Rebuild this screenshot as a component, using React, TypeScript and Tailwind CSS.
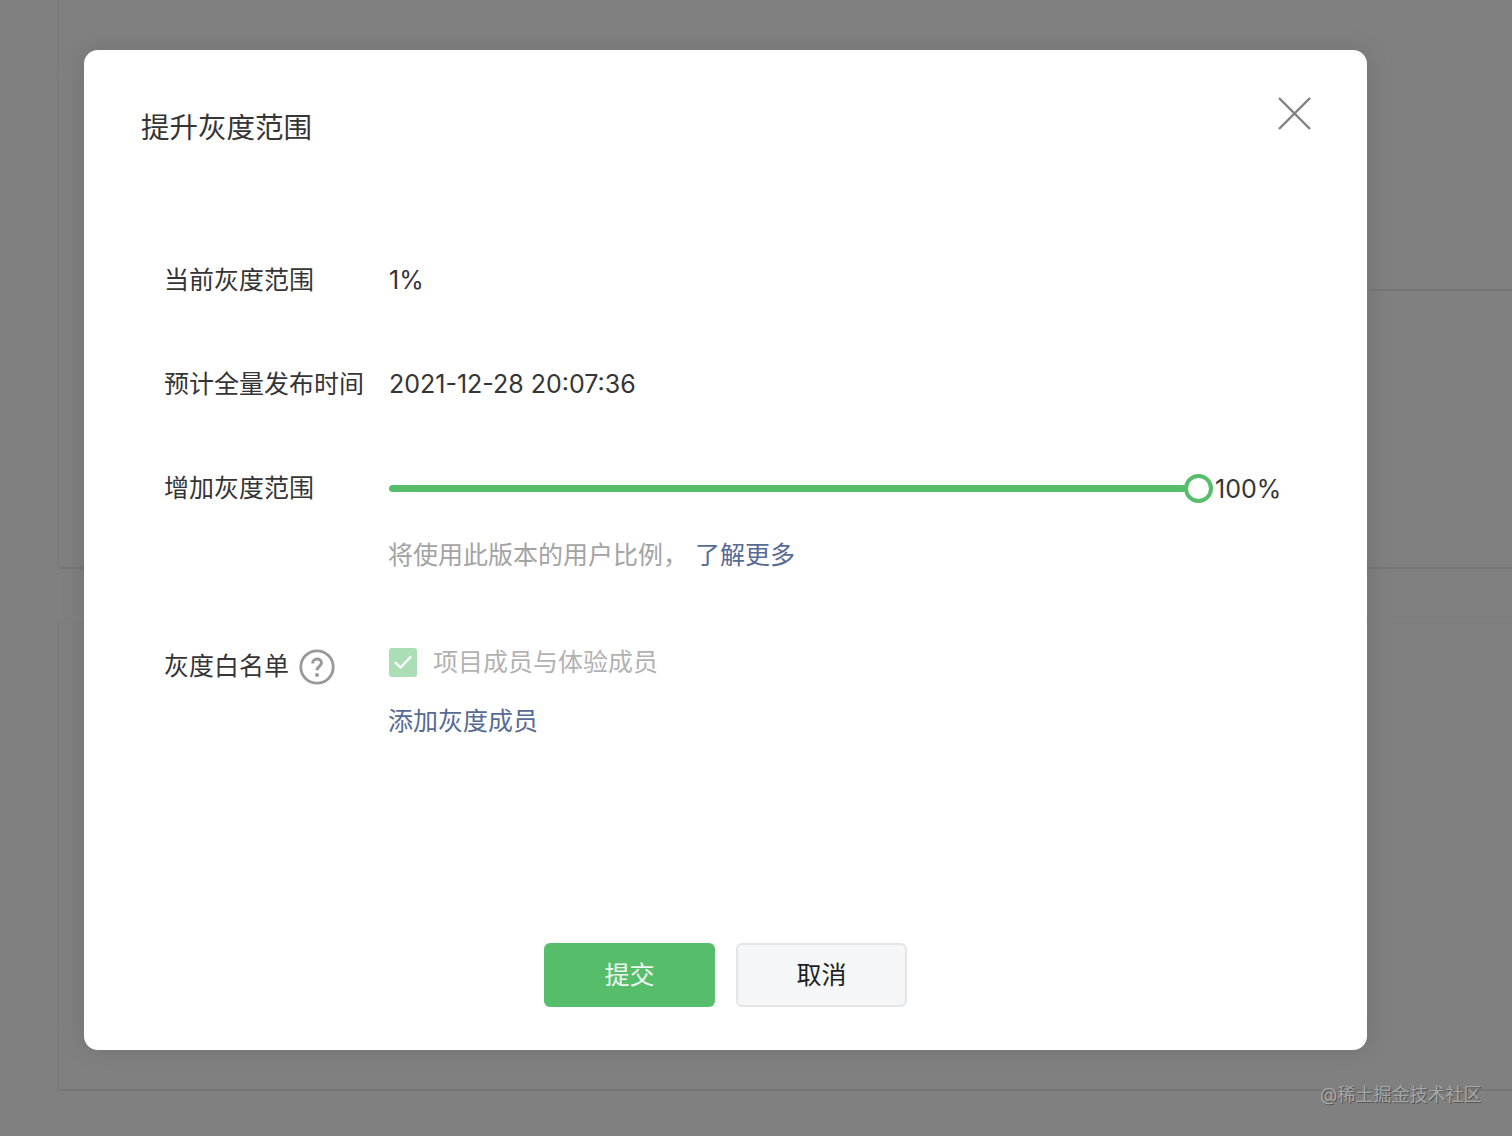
import React from 'react'

const fontStack = '[font-family:Inter,"Noto_Sans_CJK_SC",sans-serif]'

const App: React.FC = () => {
  return (
    <div className={`relative h-[1136px] w-[1512px] overflow-hidden bg-[#808080] ${fontStack}`}>
      {/* 背景页面 */}
      <div className="ml-[57px] flex flex-col">
        <div className="h-[569px] rounded-bl-[3px] border-b-2 border-l-2 border-b-[#767676] border-l-[#7b7b7b]">
          <div className="ml-[1311px] mt-[289px] h-[2px] bg-[#767676]" />
        </div>
        <div className="mt-[54px] h-[468px] rounded-bl-[3px] border-b-2 border-l-2 border-t border-b-[#767676] border-l-[#7b7b7b] border-t-[#7c7c7c]" />
      </div>

      {/* 弹窗 */}
      <div className="absolute left-[84px] top-[50px] flex h-[1000px] w-[1283px] flex-col rounded-[14px] bg-white text-[#353535] shadow-[0_0_24px_rgba(0,0,0,0.12)]">
        <div className="flex items-start justify-between pl-[57px] pr-[56px] pt-[49px]">
          <h2 className="text-[28.5px] leading-[58px]">提升灰度范围</h2>
          <svg width="33" height="33" viewBox="0 0 33 33" className="-mt-[2px]" fill="none" stroke="#7f7f7f" strokeWidth="2.4">
            <path d="M1 1l31 31M32 1L1 32" />
          </svg>
        </div>

        <div className="mt-[103px] flex flex-col pl-[80px] text-[25px] leading-[40px]">
          <div className="flex h-[40px] items-center">
            <span className="w-[225px]">当前灰度范围</span>
            <span>1%</span>
          </div>
          <div className="mt-[64px] flex h-[40px] items-center">
            <span className="w-[225px] whitespace-nowrap">预计全量发布时间</span>
            <span>2021-12-28 20:07:36</span>
          </div>
          <div className="mt-[64px] flex h-[40px] items-center">
            <span className="w-[225px]">增加灰度范围</span>
            <div className="mt-px flex items-center">
              <div className="h-[7px] w-[797px] rounded-full bg-[#56bd6b]" />
              <div className="-ml-[2px] h-[29px] w-[29px] rounded-full border-[4px] border-[#56bd6b] bg-white" />
              <span className="ml-[2px] mt-[2px] leading-none">100%</span>
            </div>
          </div>
          <div className="mt-[27px] flex h-[40px] items-center pl-[224px] text-[#a3a3a3]">
            <span>将使用此版本的用户比例，</span>
            <span className="ml-[7px] text-[#576b95]">了解更多</span>
          </div>

          <div className="mt-[67px] flex items-start">
            <div className="flex w-[225px] items-center pt-[4px]">
              <span>灰度白名单</span>
              <svg width="36" height="36" viewBox="0 0 36 36" className="ml-[10px] mt-px" fill="none">
                <circle cx="18" cy="18" r="16.2" stroke="#999999" strokeWidth="2.8" />
                <path d="M13.6 14.400c0-2.600 1.900-4.300 4.500-4.300 2.500 0 4.300 1.600 4.300 3.800 0 3.500-4.400 3.600-4.400 7.400" stroke="#999999" strokeWidth="3" />
                <circle cx="18" cy="26" r="2" fill="#999999" />
              </svg>
            </div>
            <div className="flex flex-col">
              <div className="flex h-[40px] items-center">
                <div className="flex h-[29px] w-[28px] items-center justify-center rounded-[3px] bg-[#abdeb5]">
                  <svg width="18" height="14" viewBox="0 0 18 14" fill="none" stroke="#ffffff" strokeWidth="2.400">
                    <path d="M1 7l5.500 5.500L17 1.500" />
                  </svg>
                </div>
                <span className="ml-[16px] text-[#b2b2b2]">项目成员与体验成员</span>
              </div>
              <span className="-ml-px mt-[19px] text-[#576b95]">添加灰度成员</span>
            </div>
          </div>
        </div>

        <div className="mb-[43px] mt-auto flex justify-center gap-[21px] text-[25px]">
          <button className="h-[64px] w-[171px] rounded-[6px] bg-[#56bd6b] pt-[2px] text-white/90">提交</button>
          <button className="h-[64px] w-[171px] rounded-[6px] border-2 border-[#e5e5e5] bg-[#f5f6f8] pt-[2px] text-[#1f1f1f]">取消</button>
        </div>
      </div>

      {/* 水印 */}
      <div className="absolute left-[1320px] top-[1083px] whitespace-nowrap text-[18px] leading-[24px] text-[#a6a6a6] [text-shadow:1px_1px_0_#555555]">
        @稀土掘金技术社区
      </div>
    </div>
  )
}

export default App
